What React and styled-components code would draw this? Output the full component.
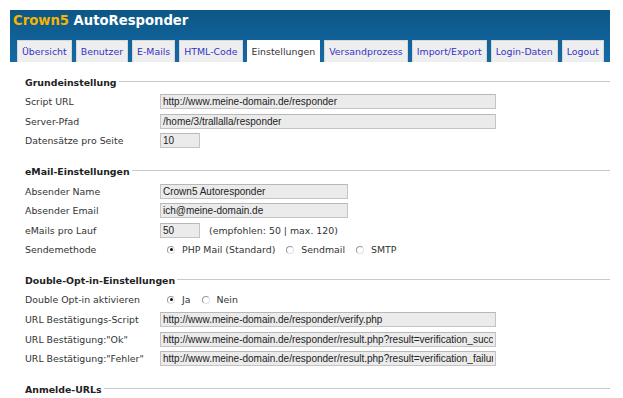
import React from "react";
import styled, { createGlobalStyle } from "styled-components";

const Global = createGlobalStyle`
  html, body { margin: 0; padding: 0; background: #fff; }
  body { font-family: "DejaVu Sans", Verdana, sans-serif; }
  * { box-sizing: border-box; }
`;

const Page = styled.div`
  width: 623px;
  padding: 10px 13px 0 10px;
`;

const Header = styled.header`
  width: 600px;
  height: 52px;
  background: linear-gradient(180deg, #0c5785 0%, #11629a 60%, #146aa3 100%);
  padding: 3px 0 0 3px;
  display: flex;
  flex-direction: column;
`;

const Title = styled.h1`
  margin: 0;
  font-family: "DejaVu Sans", Verdana, sans-serif;
  font-weight: bold;
  font-size: 13.2px;
  line-height: 16px;
  color: #fff;
`;

const Brand = styled.span`
  color: #f5b400;
`;

const Tabs = styled.nav`
  margin-top: 11px;
  padding-left: 4px;
  display: flex;
  gap: 4px;
  align-items: flex-end;
`;

const Tab = styled.a`
  display: block;
  height: 22px;
  padding: 0 4px;
  line-height: 21px;
  font-size: 9.4px;
  font-family: "DejaVu Sans", Verdana, sans-serif;
  text-decoration: none;
  white-space: nowrap;
  background: ${(p) => (p.$active ? "#ffffff" : "#eeeeee")};
  color: ${(p) => (p.$active ? "#333333" : "#3434c6")};
  border: 1px solid ${(p) => (p.$active ? "#ffffff" : "#d4d8dc")};
  border-bottom: none;
`;

const Content = styled.main`
  width: 600px;
  padding: 10px 0 0 15px;
`;

const Section = styled.section`
  margin-bottom: 10.5px;
`;

const Heading = styled.h2`
  margin: 0;
  height: 20px;
  display: flex;
  align-items: center;
  font-size: 9.4px;
  font-weight: bold;
  color: #222;
  &::after {
    content: "";
    flex: 1;
    margin-left: 2px;
    margin-top: -1px;
    border-top: 1px solid #c9c9c9;
  }
`;

const Row = styled.div`
  height: 19.6px;
  display: flex;
  align-items: center;
`;

const Label = styled.label`
  width: 135px;
  flex: none;
  font-size: 9.4px;
  color: #333;
`;

const Field = styled.input`
  width: ${(p) => p.$w}px;
  height: 15px;
  margin: 0;
  padding: 0 2px;
  border: 1px solid #c4c4c4;
  border-top-color: #b8b8b8;
  background: #ebebeb;
  font-family: "Liberation Sans", Arial, sans-serif;
  font-size: 10px;
  color: #222;
  outline: none;
`;

const Hint = styled.span`
  margin-left: 9px;
  font-size: 9.4px;
  color: #333;
`;

const RadioGroup = styled.div`
  display: flex;
  align-items: center;
  padding-left: 7px;
`;

const RadioItem = styled.label`
  display: flex;
  align-items: center;
  margin-right: 11px;
  font-size: 9.4px;
  color: #333;
`;

const RadioDot = styled.span`
  width: 8px;
  height: 8px;
  margin-right: 7px;
  border-radius: 50%;
  border: 1px solid #9a9a9a;
  border-right-color: #e2e2e2;
  border-bottom-color: #e2e2e2;
  background: #fff;
  display: flex;
  align-items: center;
  justify-content: center;
  &::after {
    content: "";
    width: 3px;
    height: 3px;
    border-radius: 50%;
    background: ${(p) => (p.$checked ? "#111" : "transparent")};
  }
`;

const tabs = [
  "Übersicht",
  "Benutzer",
  "E-Mails",
  "HTML-Code",
  "Einstellungen",
  "Versandprozess",
  "Import/Export",
  "Login-Daten",
  "Logout",
];

function Radio({ checked, children }) {
  return (
    <RadioItem>
      <RadioDot $checked={checked} />
      {children}
    </RadioItem>
  );
}

function TextRow({ label, value, w }) {
  return (
    <Row>
      <Label>{label}</Label>
      <Field readOnly value={value} $w={w} />
    </Row>
  );
}

export default function App() {
  return (
    <Page>
      <Global />
      <Header>
        <Title>
          <Brand>Crown5</Brand> AutoResponder
        </Title>
        <Tabs>
          {tabs.map((t) => (
            <Tab key={t} $active={t === "Einstellungen"}>
              {t}
            </Tab>
          ))}
        </Tabs>
      </Header>
      <Content>
        <Section>
          <Heading>Grundeinstellung</Heading>
          <TextRow label="Script URL" value="http://www.meine-domain.de/responder" w={336} />
          <TextRow label="Server-Pfad" value="/home/3/trallalla/responder" w={336} />
          <TextRow label="Datensätze pro Seite" value="10" w={40} />
        </Section>
        <Section>
          <Heading>eMail-Einstellungen</Heading>
          <TextRow label="Absender Name" value="Crown5 Autoresponder" w={188} />
          <TextRow label="Absender Email" value="ich@meine-domain.de" w={188} />
          <Row>
            <Label>eMails pro Lauf</Label>
            <Field readOnly value="50" $w={40} />
            <Hint>(empfohlen: 50 | max. 120)</Hint>
          </Row>
          <Row>
            <Label>Sendemethode</Label>
            <RadioGroup>
              <Radio checked>PHP Mail (Standard)</Radio>
              <Radio>Sendmail</Radio>
              <Radio>SMTP</Radio>
            </RadioGroup>
          </Row>
        </Section>
        <Section>
          <Heading>Double-Opt-in-Einstellungen</Heading>
          <Row>
            <Label>Double Opt-in aktivieren</Label>
            <RadioGroup>
              <Radio checked>Ja</Radio>
              <Radio>Nein</Radio>
            </RadioGroup>
          </Row>
          <TextRow label="URL Bestätigungs-Script" value="http://www.meine-domain.de/responder/verify.php" w={336} />
          <TextRow label={'URL Bestätigung:"Ok"'} value="http://www.meine-domain.de/responder/result.php?result=verification_success" w={336} />
          <TextRow label={'URL Bestätigung:"Fehler"'} value="http://www.meine-domain.de/responder/result.php?result=verification_failure" w={336} />
        </Section>
        <Section>
          <Heading>Anmelde-URLs</Heading>
        </Section>
      </Content>
    </Page>
  );
}
